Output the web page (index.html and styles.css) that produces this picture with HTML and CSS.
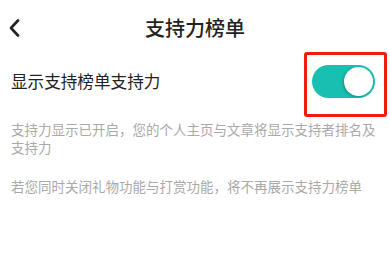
FILE: index.html
```html
<!DOCTYPE html>
<html lang="zh-CN">
<head>
<meta charset="utf-8">
<title>支持力榜单</title>
<link rel="stylesheet" href="styles.css">
</head>
<body>
<div class="page">
  <header class="header">
    <div class="back">
      <svg width="12" height="18" viewBox="0 0 12 18"><polyline points="9,1.5 2,9 9,16.5" fill="none" stroke="#222" stroke-width="2.6" stroke-linecap="round" stroke-linejoin="round"/></svg>
    </div>
    <h1 class="title">支持力榜单</h1>
    <div></div>
  </header>
  <div class="row">
    <span class="label">显示支持榜单支持力</span>
    <div class="toggle-wrap">
      <div class="toggle"><div class="knob"></div></div>
      <div class="highlight"></div>
    </div>
  </div>
  <div class="desc">
    <p>支持力显示已开启，您的个人主页与文章将显示支持者排名及支持力</p>
    <p>若您同时关闭礼物功能与打赏功能，将不再展示支持力榜单</p>
  </div>
</div>
</body>
</html>
```
FILE: styles.css
```css
* { box-sizing: border-box; }
html, body { margin: 0; padding: 0; background: #fff; }
body {
  font-family: "Noto Sans CJK SC", "Noto Sans", sans-serif;
  color: #222;
}
.page { width: 390px; }
.header {
  height: 56px;
  display: grid;
  grid-template-columns: 1fr auto 1fr;
  align-items: center;
}
.back {
  padding-left: 9px;
  display: flex;
  align-items: center;
  height: 18px;
}
.back svg { display: block; }
.title {
  margin: 0;
  font-size: 20px;
  font-weight: 500;
  line-height: 28px;
  color: #222;
}
.row {
  height: 50px;
  padding: 0 15px 0 11px;
  display: flex;
  align-items: center;
  justify-content: space-between;
}
.label {
  font-size: 16.6px;
  line-height: 24px;
  color: #222;
}
.toggle-wrap { position: relative; }
.toggle {
  width: 63px;
  height: 33px;
  border-radius: 17px;
  background: #19bfb1;
  padding: 2px;
  display: flex;
  justify-content: flex-end;
}
.knob {
  width: 29px;
  height: 29px;
  border-radius: 50%;
  background: #fff;
  box-shadow: -1px 1px 3px rgba(0,0,0,0.25);
}
.highlight {
  position: absolute;
  left: -8px;
  top: -13px;
  width: 83px;
  height: 65px;
  border: 3px solid #f2190f;
  border-radius: 3px;
}
.desc {
  padding: 14px 11px 0 11px;
}
.desc p {
  margin: 0 0 21px 0;
  font-size: 13.5px;
  line-height: 18px;
  color: #a9a9a9;
}
```
